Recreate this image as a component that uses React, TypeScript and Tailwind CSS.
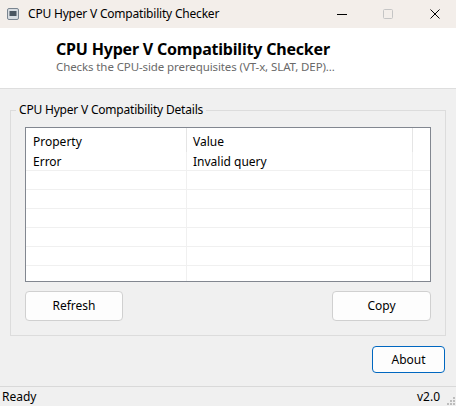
import React from "react";

const font = { fontFamily: '"Noto Sans", "Open Sans", sans-serif' };

function Row({ a, b }: { a?: string; b?: string }) {
  return (
    <div className="flex h-[19px] border-b border-[#f0f0f0] text-[12px] leading-[20px] text-black">
      <div className="w-[161px] pl-[7px] border-r border-[#f0f0f0]">{a}</div>
      <div className="w-[226px] pl-[6px] border-r border-[#f0f0f0]">{b}</div>
      <div className="flex-1" />
    </div>
  );
}

export default function App() {
  return (
    <div className="w-[456px] h-[406px] flex flex-col bg-[#f0f0f0] overflow-hidden" style={font}>
      {/* Title bar */}
      <div className="h-[28px] flex items-center bg-[#f3eeea] shrink-0">
        <svg className="ml-[7px]" width="12" height="12" viewBox="0 0 12 12">
          <rect x="0.5" y="0.5" width="11" height="11" rx="1.5" fill="#d8dde2" stroke="#7a8590" />
          <rect x="2.5" y="3" width="7" height="5" fill="#4a5661" />
        </svg>
        <span className="ml-[9px] text-[12px] tracking-[-0.2px] text-black leading-none">CPU Hyper V Compatibility Checker</span>
        <div className="flex-1" />
        <svg width="10" height="10" viewBox="0 0 10 10" className="mr-[36px]">
          <line x1="0" y1="5.5" x2="10" y2="5.5" stroke="#000" strokeWidth="1" />
        </svg>
        <svg width="10" height="10" viewBox="0 0 10 10" className="mr-[37px]">
          <rect x="0.5" y="0.5" width="9" height="9" rx="1" fill="none" stroke="#c5c5c5" />
        </svg>
        <svg width="10" height="10" viewBox="0 0 10 10" className="mr-[16px]">
          <path d="M0.5 0.5 L9.5 9.5 M9.5 0.5 L0.5 9.5" stroke="#000" strokeWidth="1" />
        </svg>
      </div>

      {/* Header */}
      <div className="h-[61px] bg-white border-b border-[#dedede] shrink-0 pl-[56px] pt-[11px]">
        <div className="text-[16px] font-bold leading-[20px] tracking-[-0.2px] text-black">CPU Hyper V Compatibility Checker</div>
        <div className="text-[11.5px] leading-[14px] mt-[1px] tracking-[-0.1px] text-[#6a6a6a]">Checks the CPU-side prerequisites (VT-x, SLAT, DEP)...</div>
      </div>

      {/* Group box */}
      <fieldset className="mx-[10px] mt-[13px] border border-[#dcdcdc] px-[14px] pb-[14px] pt-[9px] min-w-0">
        <legend className="ml-[-9px] px-[3px] text-[12px] leading-[16px] tracking-[-0.2px] text-black">CPU Hyper V Compatibility Details</legend>
        <div className="h-[155px] border border-[#828790] bg-white overflow-hidden">
          <div className="flex h-[24px] text-[12px] leading-[27px] text-black">
            <div className="w-[161px] pl-[7px] border-r border-[#e5e5e5]">Property</div>
            <div className="w-[226px] pl-[6px] border-r border-[#e5e5e5]">Value</div>
            <div className="flex-1" />
          </div>
          <Row a="Error" b="Invalid query" />
          <Row />
          <Row />
          <Row />
          <Row />
          <Row />
          <Row />
        </div>
        <div className="flex justify-between mt-[9px]">
          <button className="w-[98px] h-[30px] rounded-[4px] border border-[#d0d0d0] bg-[#fdfdfd] text-[12px] text-black">Refresh</button>
          <button className="w-[99px] h-[30px] rounded-[4px] border border-[#d0d0d0] bg-[#fdfdfd] text-[12px] text-black">Copy</button>
        </div>
      </fieldset>

      <div className="flex justify-end mt-[10px] mr-[11px]">
        <button className="w-[73px] h-[27px] rounded-[4px] border border-[#0067c0] bg-[#fdfdfd] text-[12px] text-black">About</button>
      </div>

      <div className="flex-1" />

      {/* Status bar */}
      <div className="h-[20px] border-t border-[#d9d9d9] flex items-center justify-between pl-[2px] shrink-0">
        <span className="text-[12px] leading-none text-black">Ready</span>
        <div className="flex items-center">
          <span className="text-[12px] leading-none text-black">v2.0</span>
          <svg width="12" height="12" viewBox="0 0 12 12" className="ml-[4px] mt-[6px]">
            <rect x="9" y="9" width="2" height="2" fill="#bdbdbd" />
            <rect x="6" y="9" width="2" height="2" fill="#bdbdbd" />
            <rect x="9" y="6" width="2" height="2" fill="#bdbdbd" />
            <rect x="3" y="9" width="2" height="2" fill="#bdbdbd" />
            <rect x="6" y="6" width="2" height="2" fill="#bdbdbd" />
            <rect x="9" y="3" width="2" height="2" fill="#bdbdbd" />
          </svg>
        </div>
      </div>
    </div>
  );
}
